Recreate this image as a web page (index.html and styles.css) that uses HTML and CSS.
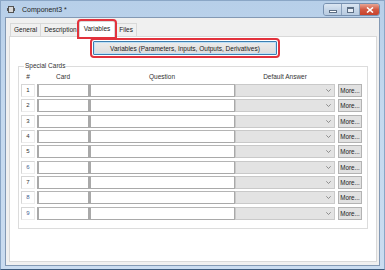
FILE: index.html
```html
<!DOCTYPE html>
<html lang="en">
<head>
  <meta charset="UTF-8">
  <title>Component3 *</title>
  <link rel="stylesheet" href="styles.css">
</head>
<body>
<div class="window">
  <div class="titlebar">
    <svg class="app-icon" width="8" height="7" viewBox="0 0 8 7">
      <rect x="1.5" y="0.5" width="5" height="6" fill="#d8d8d8" stroke="#555"/>
      <rect x="0" y="2" width="1.5" height="3" fill="#555"/>
      <rect x="6.5" y="2" width="1.5" height="3" fill="#555"/>
    </svg>
    <span class="title">Component3 *</span>
    <div class="caption-btns">
      <div class="cbtn min"><span class="min-bar"></span></div>
      <div class="cbtn max"><span class="max-box"></span></div>
      <div class="cbtn close">
        <svg width="8" height="6" viewBox="0 0 8 6">
          <path d="M1 0.5 L7 5.5 M7 0.5 L1 5.5" stroke="#fff" stroke-width="1.6"/>
        </svg>
      </div>
    </div>
  </div>

  <div class="client">
    <div class="tabs">
      <div class="tab">General</div>
      <div class="tab">Description</div>
      <div class="tab active">Variables</div>
      <div class="tab">Files</div>
    </div>

    <div class="pane">
      <button class="vars-btn">Variables (Parameters, Inputs, Outputs, Derivatives)</button>

      <fieldset class="group">
        <legend>Special Cards</legend>
        <div class="row head">
          <div class="c-num">#</div>
          <div class="c-card">Card</div>
          <div class="c-question">Question</div>
          <div class="c-answer">Default Answer</div>
        </div>

        <div class="rows">
          <div class="row">
            <div class="c-num num">1</div>
            <input class="c-card field"><input class="c-question field">
            <div class="c-answer combo"><svg width="5" height="3" viewBox="0 0 5 3"><path d="M0.3 0.3 L2.5 2.5 L4.7 0.3" fill="none" stroke="#777" stroke-width="0.8"/></svg></div>
            <button class="c-more more">More...</button>
          </div>
          <div class="row">
            <div class="c-num num">2</div>
            <input class="c-card field"><input class="c-question field">
            <div class="c-answer combo"><svg width="5" height="3" viewBox="0 0 5 3"><path d="M0.3 0.3 L2.5 2.5 L4.7 0.3" fill="none" stroke="#777" stroke-width="0.8"/></svg></div>
            <button class="c-more more">More...</button>
          </div>
          <div class="row">
            <div class="c-num num">3</div>
            <input class="c-card field"><input class="c-question field">
            <div class="c-answer combo"><svg width="5" height="3" viewBox="0 0 5 3"><path d="M0.3 0.3 L2.5 2.5 L4.7 0.3" fill="none" stroke="#777" stroke-width="0.8"/></svg></div>
            <button class="c-more more">More...</button>
          </div>
          <div class="row">
            <div class="c-num num">4</div>
            <input class="c-card field"><input class="c-question field">
            <div class="c-answer combo"><svg width="5" height="3" viewBox="0 0 5 3"><path d="M0.3 0.3 L2.5 2.5 L4.7 0.3" fill="none" stroke="#777" stroke-width="0.8"/></svg></div>
            <button class="c-more more">More...</button>
          </div>
          <div class="row">
            <div class="c-num num">5</div>
            <input class="c-card field"><input class="c-question field">
            <div class="c-answer combo"><svg width="5" height="3" viewBox="0 0 5 3"><path d="M0.3 0.3 L2.5 2.5 L4.7 0.3" fill="none" stroke="#777" stroke-width="0.8"/></svg></div>
            <button class="c-more more">More...</button>
          </div>
          <div class="row">
            <div class="c-num num blue">6</div>
            <input class="c-card field"><input class="c-question field">
            <div class="c-answer combo"><svg width="5" height="3" viewBox="0 0 5 3"><path d="M0.3 0.3 L2.5 2.5 L4.7 0.3" fill="none" stroke="#777" stroke-width="0.8"/></svg></div>
            <button class="c-more more">More...</button>
          </div>
          <div class="row">
            <div class="c-num num">7</div>
            <input class="c-card field"><input class="c-question field">
            <div class="c-answer combo"><svg width="5" height="3" viewBox="0 0 5 3"><path d="M0.3 0.3 L2.5 2.5 L4.7 0.3" fill="none" stroke="#777" stroke-width="0.8"/></svg></div>
            <button class="c-more more">More...</button>
          </div>
          <div class="row">
            <div class="c-num num blue">8</div>
            <input class="c-card field"><input class="c-question field">
            <div class="c-answer combo"><svg width="5" height="3" viewBox="0 0 5 3"><path d="M0.3 0.3 L2.5 2.5 L4.7 0.3" fill="none" stroke="#777" stroke-width="0.8"/></svg></div>
            <button class="c-more more">More...</button>
          </div>
          <div class="row">
            <div class="c-num num blue">9</div>
            <input class="c-card field"><input class="c-question field">
            <div class="c-answer combo"><svg width="5" height="3" viewBox="0 0 5 3"><path d="M0.3 0.3 L2.5 2.5 L4.7 0.3" fill="none" stroke="#777" stroke-width="0.8"/></svg></div>
            <button class="c-more more">More...</button>
          </div>
        </div>
      </fieldset>
    </div>
  </div>
</div>
</body>
</html>
```

FILE: styles.css
```css
body {
  margin: 0;
  font-family: "Liberation Sans", Arial, sans-serif;
  font-size: 6.5px;
  color: #222;
  background: #fff;
}

.window {
  width: 385px;
  height: 270px;
  box-sizing: border-box;
  display: flex;
  flex-direction: column;
  padding: 0 4px 3px 4px;
  background: linear-gradient(#b7cfe9, #c4d9ef 40%, #cadcf0);
  border: 1px solid #8aa6c6;
  border-bottom-color: #3c5a7c;
}

/* title bar */
.titlebar {
  height: 16px;
  display: flex;
  align-items: center;
  padding-left: 2px;
}

.app-icon {
  margin-top: 1px;
}

.title {
  margin-left: 7px;
  font-size: 7px;
  color: #1e1e1e;
}

.caption-btns {
  margin-left: auto;
  margin-top: 1px;
  display: flex;
  height: 11px;
  border: 1px solid #7891b0;
  border-radius: 3px;
  overflow: hidden;
}

.cbtn {
  display: flex;
  align-items: center;
  justify-content: center;
  height: 100%;
  background: linear-gradient(#dbe6f2, #c6d6e8 50%, #b8cbe0);
}

.min {
  width: 17px;
  border-right: 1px solid #8aa0bb;
}

.max {
  width: 17px;
  border-right: 1px solid #8aa0bb;
}

.close {
  width: 19px;
  background: linear-gradient(#e8a493, #d25a44 50%, #c7422b);
}

.min-bar {
  width: 6px;
  height: 1px;
  margin-top: 3px;
  background: #fff;
  border: 1px solid #5d6f85;
}

.max-box {
  width: 5px;
  height: 3px;
  border: 1px solid #5d6f85;
  border-top-width: 2px;
  background: #e8eef6;
}

/* client area */
.client {
  flex: 1;
  display: flex;
  flex-direction: column;
  background: #f0f0f0;
  border: 1px solid #8399b4;
  padding: 2px 2px 3px 3px;
}

.tabs {
  display: flex;
  align-items: flex-end;
  height: 16px;
  padding-left: 1px;
}

.tab {
  height: 13px;
  box-sizing: border-box;
  padding: 0 3px;
  line-height: 12px;
  border: 1px solid #d9d9d9;
  border-bottom: none;
  margin-right: -1px;
  background: #f0f0f0;
  color: #222;
}

.tab.active {
  height: 16px;
  line-height: 14px;
  margin: 0 0 -1px -1px;
  padding: 0 4px;
  background: #fff;
  position: relative;
  z-index: 1;
  outline: 2px solid #e2323c;
  outline-offset: 0;
  border-radius: 2px 2px 0 0;
}

.pane {
  flex: 1;
  background: #fff;
  border: 1px solid #d9d9d9;
  width: 366px;
}

.vars-btn {
  display: block;
  margin: 4px 0 0 83px;
  width: 184px;
  height: 14px;
  padding: 0;
  font-family: inherit;
  font-size: 6.5px;
  color: #222;
  background: linear-gradient(#ececec, #dcdcdc);
  border: 1px solid #3c7fb1;
  box-shadow: inset 0 0 0 1px #bfe0f7;
  outline: 2px solid #e2323c;
  outline-offset: 1px;
  border-radius: 1px;
}

/* Special Cards group */
.group {
  margin: 7px 0 0 8px;
  width: 350px;
  box-sizing: border-box;
  padding: 3px 0 8px 2px;
  border: 1px solid #dcdcdc;
}

.group legend {
  padding: 0 1px;
  margin-left: 3px;
  line-height: 8px;
  color: #333;
}

.row {
  display: flex;
  height: 13px;
}

.row.head {
  height: 8px;
  line-height: 8px;
  margin-bottom: 3px;
  text-align: center;
  color: #333;
}

.rows {
  display: flex;
  flex-direction: column;
  gap: 2.34px;
}

.c-num {
  width: 14px;
}

.c-card {
  width: 52px;
  margin-left: 2px;
}

.c-question {
  width: 146px;
}

.c-answer {
  width: 100px;
}

.c-more {
  width: 24px;
  margin-left: 3px;
}

.num {
  box-sizing: border-box;
  border: 1px solid #d6d6d6;
  border-right-color: #ececec;
  border-bottom-color: #ececec;
  text-align: center;
  line-height: 11px;
  font-size: 6px;
  color: #333;
}

.num.blue {
  color: #3f6494;
}

.field {
  box-sizing: border-box;
  height: 13px;
  padding: 0;
  margin-top: 0;
  margin-bottom: 0;
  border: 1px solid #a9a9a9;
  border-left-width: 2px;
  border-top-color: #b4b4b4;
  background: #fff;
}

.combo {
  box-sizing: border-box;
  height: 13px;
  display: flex;
  align-items: center;
  justify-content: flex-end;
  padding-right: 3px;
  background: #e3e3e3;
  border: 1px solid #c9c9c9;
}

.more {
  box-sizing: border-box;
  height: 13px;
  padding: 0;
  font-family: inherit;
  font-size: 6.3px;
  color: #222;
  background: #e1e1e1;
  border: 1px solid #b3b3b3;
}
```
